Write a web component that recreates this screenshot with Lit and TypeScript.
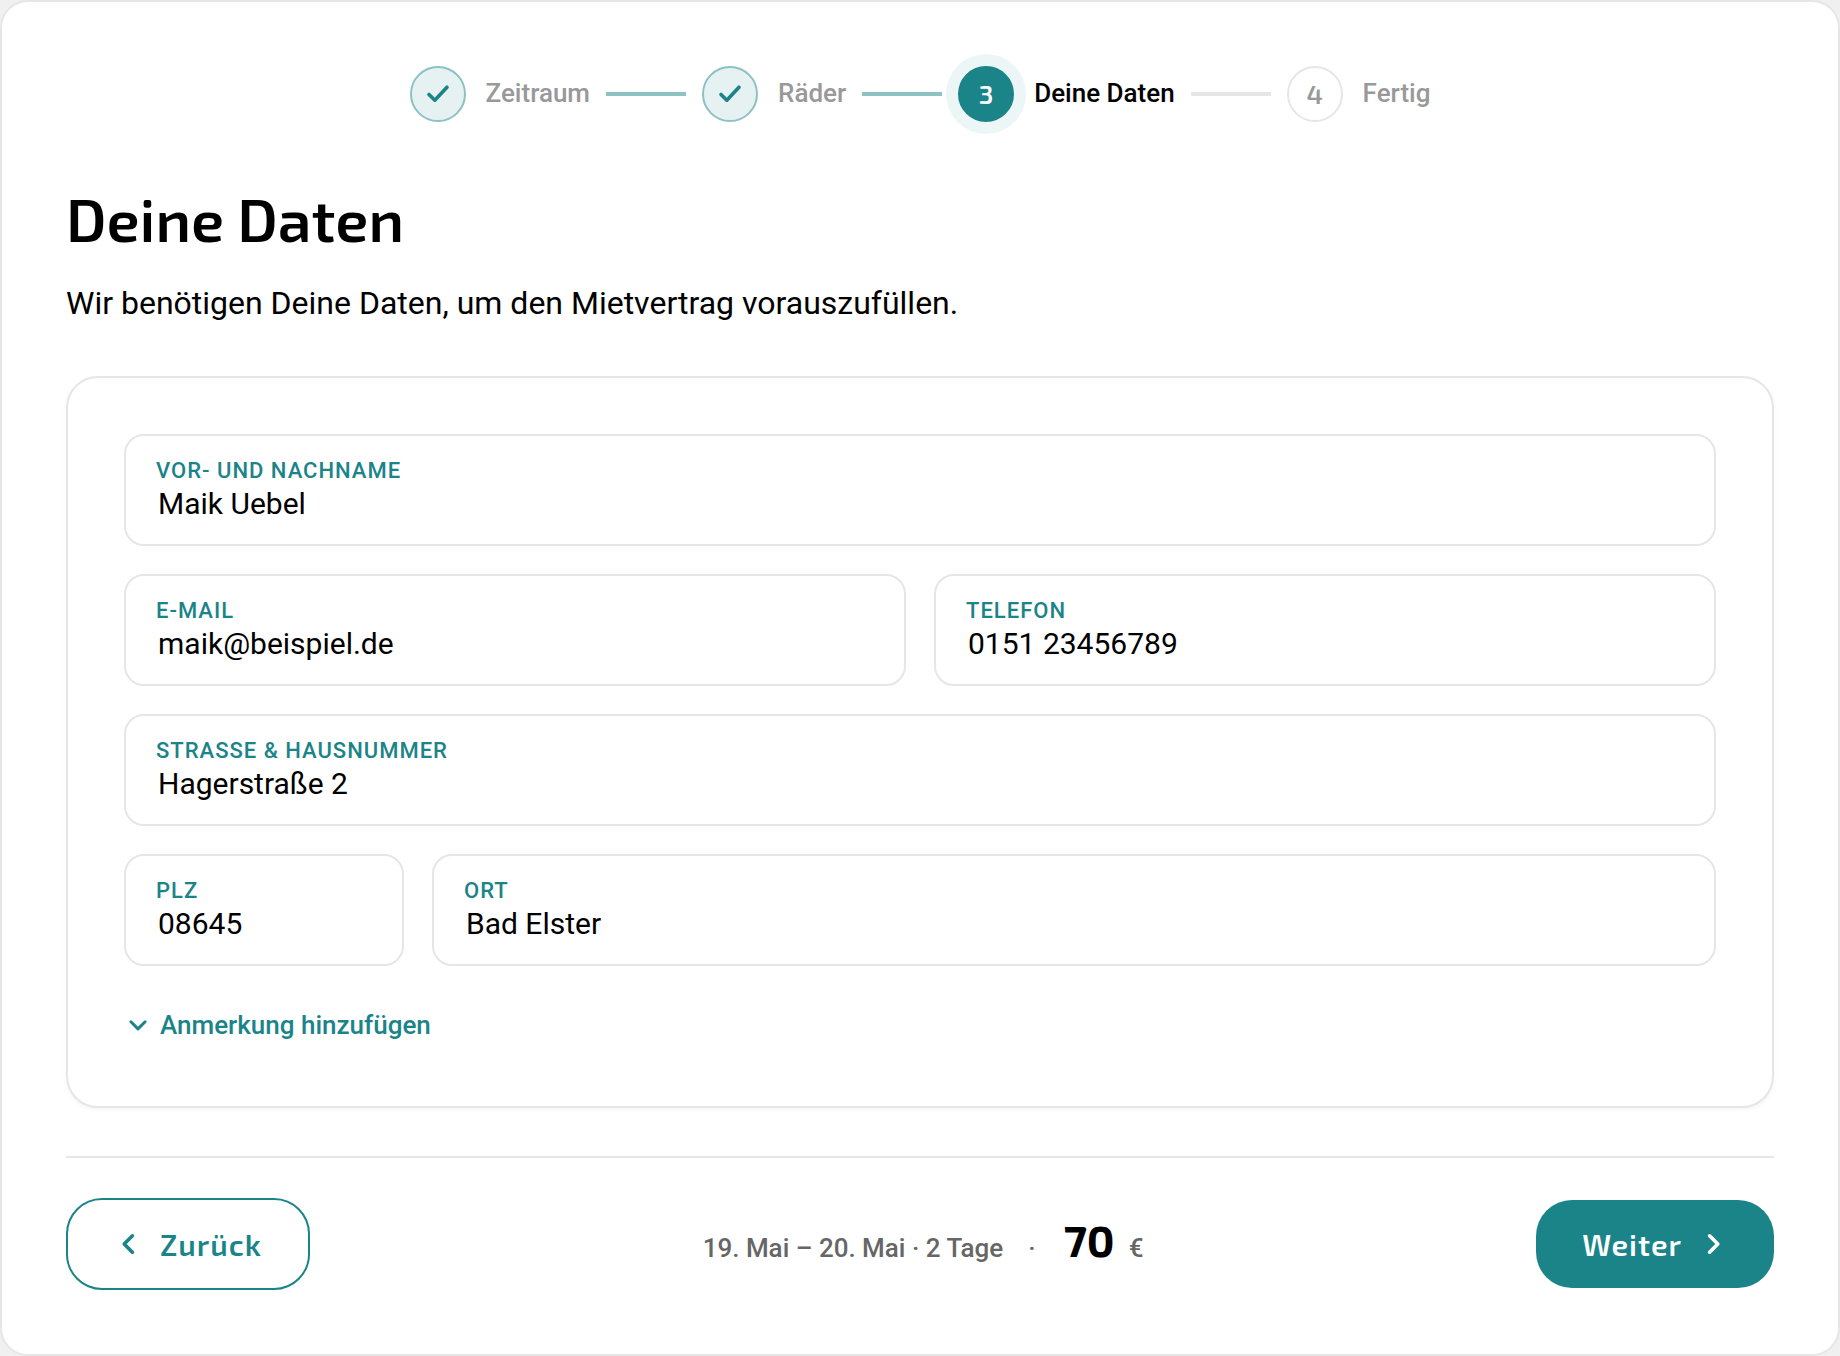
import { LitElement, html, css, svg, nothing } from "lit";
import { customElement, property, state } from "lit/decorators.js";
import { classMap } from "lit/directives/class-map.js";

type StepState = "done" | "current" | "upcoming";

interface Step {
  label: string;
  state: StepState;
}

interface Field {
  id: string;
  label: string;
  value: string;
  type: string;
  autocomplete: string;
  span: "full" | "half" | "short" | "rest";
}

const STEPS: Step[] = [
  { label: "Zeitraum", state: "done" },
  { label: "Räder", state: "done" },
  { label: "Deine Daten", state: "current" },
  { label: "Fertig", state: "upcoming" },
];

const FIELDS: Field[][] = [
  [{ id: "name", label: "Vor- und Nachname", value: "Maik Uebel", type: "text", autocomplete: "name", span: "full" }],
  [
    { id: "email", label: "E-Mail", value: "maik@beispiel.de", type: "email", autocomplete: "email", span: "half" },
    { id: "phone", label: "Telefon", value: "0151 23456789", type: "tel", autocomplete: "tel", span: "half" },
  ],
  [{ id: "street", label: "Strasse & Hausnummer", value: "Hagerstraße 2", type: "text", autocomplete: "street-address", span: "full" }],
  [
    { id: "zip", label: "PLZ", value: "08645", type: "text", autocomplete: "postal-code", span: "short" },
    { id: "city", label: "Ort", value: "Bad Elster", type: "text", autocomplete: "address-level2", span: "rest" },
  ],
];

const icon = (d: string, size: number, width: number) => html`
  <svg
    width=${size}
    height=${size}
    viewBox="0 0 24 24"
    fill="none"
    stroke="currentColor"
    stroke-width=${width}
    stroke-linecap="round"
    stroke-linejoin="round"
    aria-hidden="true"
  >${svg`<path d=${d}></path>`}</svg>
`;

@customElement("step-bar")
export class StepBar extends LitElement {
  @property({ attribute: false }) steps: Step[] = [];

  static styles = css`
    :host {
      display: block;
    }
    .steps {
      display: flex;
      align-items: center;
      justify-content: center;
      gap: 16px;
      margin: 0;
      padding: 0;
      list-style: none;
    }
    .step {
      display: flex;
      align-items: center;
      gap: 20px;
      color: #999999;
      font-size: 26px;
      line-height: 32px;
      font-weight: 500;
    }
    .badge {
      display: flex;
      align-items: center;
      justify-content: center;
      box-sizing: border-box;
      width: 56px;
      height: 56px;
      border: 2px solid #e6e6e6;
      border-radius: 50%;
      font-family: "Exo 2", "Open Sans", sans-serif;
      font-size: 26px;
      font-weight: 600;
    }
    .name {
      padding-bottom: 2px;
    }
    .done .badge {
      border-color: #8dc1c4;
      background: #e6f2f2;
      color: #1b8489;
    }
    .current {
      color: #000000;
    }
    .current .badge {
      border-color: #1b8489;
      background: #1b8489;
      color: #ffffff;
      box-shadow: 0 0 0 12px #edf6f6;
    }
    .line {
      width: 80px;
      height: 4px;
      background: #e6e6e6;
    }
    .line.passed {
      background: #8dc1c4;
    }
  `;

  render() {
    return html`
      <ol class="steps">
        ${this.steps.map(
          (s, i) => html`
            <li
              class=${classMap({ step: true, [s.state]: true })}
              aria-current=${s.state === "current" ? "step" : nothing}
            >
              <span class="badge">
                ${s.state === "done" ? icon("M3 12.4 L8.8 18.2 L21 5.2", 24, 3.6) : i + 1}
              </span>
              <span class="name">${s.label}</span>
            </li>
            ${i < this.steps.length - 1
              ? html`<li
                  class=${classMap({ line: true, passed: s.state === "done" })}
                  role="presentation"
                ></li>`
              : nothing}
          `
        )}
      </ol>
    `;
  }
}

@customElement("app-root")
export class AppRoot extends LitElement {
  @state() private noteOpen = false;

  static styles = css`
    :host {
      display: block;
      background: #f0f0f0;
      color: #000000;
      font-family: Roboto, sans-serif;
    }
    .page {
      box-sizing: border-box;
      padding: 64px;
      border: 2px solid #e6e6e6;
      border-radius: 28px;
      background: #ffffff;
    }
    .title {
      margin: 60px 0 24px;
      font-family: "Exo 2", "Open Sans", sans-serif;
      font-size: 60px;
      line-height: 72px;
      font-weight: 600;
    }
    .intro {
      margin: 0 0 48px;
      font-size: 32px;
      line-height: 50px;
    }
    .card {
      display: flex;
      flex-direction: column;
      gap: 28px;
      padding: 56px;
      border: 2px solid #e6e6e6;
      border-radius: 32px;
      background: #ffffff;
      box-shadow: 0 2px 4px rgba(0, 0, 0, 0.04);
    }
    .row {
      display: flex;
      gap: 28px;
    }
    .field {
      display: flex;
      flex: 1 1 0;
      flex-direction: column;
      box-sizing: border-box;
      min-width: 0;
      padding: 21px 30px 23px;
      border: 2px solid #e6e6e6;
      border-radius: 20px;
    }
    .field:focus-within {
      border-color: #1b8489;
    }
    .short {
      flex: 0 0 280px;
    }
    .label {
      color: #1b8489;
      font-size: 22px;
      line-height: 28px;
      font-weight: 500;
      letter-spacing: 1px;
      text-transform: uppercase;
    }
    .input {
      box-sizing: border-box;
      width: 100%;
      height: 36px;
      padding: 0 2px;
      border: 0;
      outline: 0;
      background: transparent;
      color: #000000;
      font-family: inherit;
      font-size: 30px;
    }
    .note {
      height: 120px;
      resize: vertical;
    }
    .toggle {
      display: flex;
      align-items: center;
      align-self: flex-start;
      gap: 10px;
      height: 50px;
      margin: 6px 0 0;
      padding: 0 2px;
      border: 0;
      background: none;
      color: #1b8489;
      font-family: inherit;
      font-size: 26px;
      font-weight: 500;
      cursor: pointer;
    }
    .footer {
      display: flex;
      align-items: center;
      justify-content: space-between;
      margin-top: 48px;
      padding-top: 40px;
      border-top: 2px solid #e6e6e6;
    }
    .button {
      display: flex;
      align-items: center;
      gap: 20px;
      box-sizing: border-box;
      border: 0;
      border-radius: 36px;
      font-family: "Exo 2", "Open Sans", sans-serif;
      font-size: 30px;
      font-weight: 600;
      letter-spacing: 1px;
      cursor: pointer;
    }
    .back {
      height: 92px;
      padding: 0 46px 0 48px;
      border: 2px solid #1b8489;
      background: #ffffff;
      color: #1b8489;
    }
    .next {
      height: 88px;
      padding: 0 48px 0 46px;
      background: #1b8489;
      color: #ffffff;
    }
    .summary {
      display: flex;
      align-items: baseline;
      padding-bottom: 10px;
      color: #666666;
      font-size: 26px;
      font-weight: 500;
    }
    .dot {
      margin: 0 28px 0 25px;
    }
    .price {
      margin-right: 14px;
      color: #000000;
      font-family: "Exo 2", "Open Sans", sans-serif;
      font-size: 44px;
      font-weight: 700;
    }
  `;

  private toggleNote() {
    this.noteOpen = !this.noteOpen;
  }

  render() {
    return html`
      <main class="page">
        <step-bar .steps=${STEPS}></step-bar>
        <h1 class="title">Deine Daten</h1>
        <p class="intro">Wir benötigen Deine Daten, um den Mietvertrag vorauszufüllen.</p>

        <form class="card" @submit=${(e: Event) => e.preventDefault()}>
          ${FIELDS.map(
            (row) => html`
              <div class="row">
                ${row.map(
                  (f) => html`
                    <div class="field ${f.span}">
                      <label class="label" for=${f.id}>${f.label}</label>
                      <input
                        class="input"
                        id=${f.id}
                        name=${f.id}
                        type=${f.type}
                        autocomplete=${f.autocomplete}
                        .value=${f.value}
                      />
                    </div>
                  `
                )}
              </div>
            `
          )}
          <button
            class="toggle"
            type="button"
            aria-expanded=${this.noteOpen ? "true" : "false"}
            @click=${this.toggleNote}
          >
            ${icon("M4.9 8.8 L12 15.9 L19.1 8.8", 24, 3)}
            <span>Anmerkung hinzufügen</span>
          </button>
          ${this.noteOpen
            ? html`<div class="field">
                <label class="label" for="note">Anmerkung</label>
                <textarea class="input note" id="note" name="note"></textarea>
              </div>`
            : nothing}
        </form>

        <footer class="footer">
          <button class="button back" type="button">
            ${icon("M16.4 3.8 L8.2 12 L16.4 20.2", 24, 3.6)}
            <span>Zurück</span>
          </button>
          <div class="summary">
            <span>19. Mai – 20. Mai · 2 Tage</span>
            <span class="dot">·</span>
            <span class="price">70</span>
            <span>€</span>
          </div>
          <button class="button next" type="button">
            <span>Weiter</span>
            ${icon("M7.6 3.8 L15.8 12 L7.6 20.2", 24, 3.6)}
          </button>
        </footer>
      </main>
    `;
  }
}
